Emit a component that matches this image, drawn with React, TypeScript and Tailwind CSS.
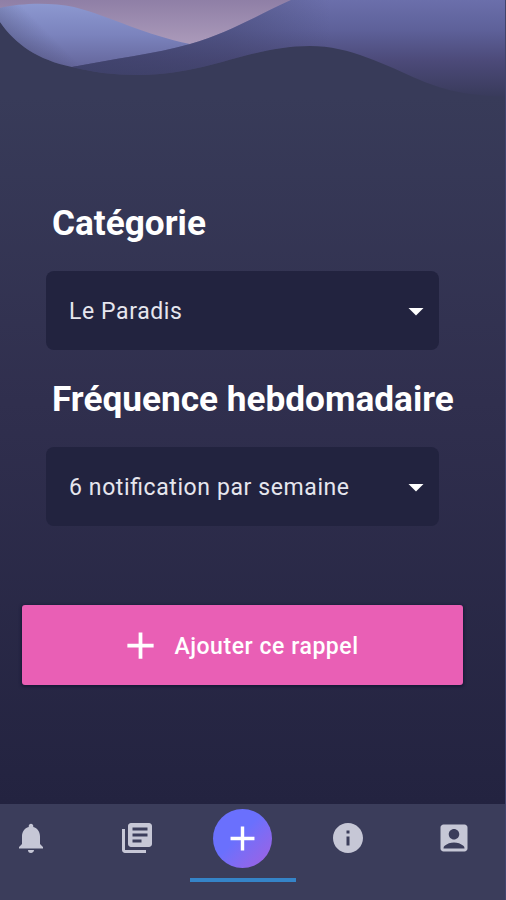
import type { IconType } from "react-icons";
import {
  MdAccountBox,
  MdAdd,
  MdArrowDropDown,
  MdInfo,
  MdLibraryBooks,
  MdNotifications,
} from "react-icons/md";

const Waves = () => (
  <svg className="block w-full h-[110px]" viewBox="0 0 505 110" fill="none">
    <defs>
      <linearGradient id="sky" x1="0" y1="0" x2="0" y2="44" gradientUnits="userSpaceOnUse">
        <stop stopColor="#8f7fa6" />
        <stop offset="1" stopColor="#ab9aba" />
      </linearGradient>
      <linearGradient id="leftWave" x1="60" y1="2" x2="60" y2="68" gradientUnits="userSpaceOnUse">
        <stop stopColor="#8d99d1" />
        <stop offset="0.5" stopColor="#7b83bd" />
        <stop offset="1" stopColor="#64659a" />
      </linearGradient>
      <linearGradient id="leftShade" x1="12" y1="52" x2="40" y2="24" gradientUnits="userSpaceOnUse">
        <stop stopColor="#45466a" stopOpacity="0.5" />
        <stop offset="1" stopColor="#45466a" stopOpacity="0" />
      </linearGradient>
      <linearGradient id="rightWave" x1="0" y1="0" x2="0" y2="98" gradientUnits="userSpaceOnUse">
        <stop stopColor="#6b6fab" />
        <stop offset="0.3" stopColor="#5e619a" />
        <stop offset="0.62" stopColor="#4c4a79" />
        <stop offset="1" stopColor="#383a5a" />
      </linearGradient>
      <linearGradient id="midShade" x1="70" y1="0" x2="330" y2="0" gradientUnits="userSpaceOnUse">
        <stop stopColor="#3c4068" stopOpacity="0.75" />
        <stop offset="0.6" stopColor="#3c4068" stopOpacity="0.4" />
        <stop offset="1" stopColor="#3c4068" stopOpacity="0" />
      </linearGradient>
    </defs>
    <path d="M0 0H300L250 40L190 46L60 30L0 12Z" fill="url(#sky)" />
    <path d="M0 8C20 3 50 2 74 7C112 17 145 35 190 44L150 60L72 67C38 60 15 44 0 22Z" fill="url(#leftWave)" />
    <path d="M0 8C20 3 50 2 74 7C112 17 145 35 190 44L150 60L72 67C38 60 15 44 0 22Z" fill="url(#leftShade)" />
    <path
      d="M72 67C112 59 155 54 190 44C228 33 254 17 291 0H505V97C470 95 448 92 420 80C385 65 350 46 310 46C250 46 210 74 140 75C112 75 92 72 72 67Z"
      fill="url(#rightWave)"
    />
    <path
      d="M72 67C112 59 155 54 190 44C228 33 254 17 291 0H330V47L310 46C250 46 210 74 140 75C112 75 92 72 72 67Z"
      fill="url(#midShade)"
    />
  </svg>
);

const SelectField = ({ label, value }: { label: string; value: string }) => (
  <div>
    <h2 className="ml-[6px] text-[35.2px] leading-[42px] font-bold text-white whitespace-nowrap">{label}</h2>
    <button className="mt-[27px] flex h-[79px] w-[393px] items-center justify-between rounded-lg bg-[#22233f] pl-[23px] pr-[5px]">
      <span className="pt-[3px] text-[23px] tracking-[0.6px] text-[#e6e6ee] whitespace-nowrap [font-feature-settings:'liga'_1]">
        {value}
      </span>
      <MdArrowDropDown className="size-9 text-white" />
    </button>
  </div>
);

const tabs: { name: string; icon: IconType }[] = [
  { name: "Notifications", icon: MdNotifications },
  { name: "Catégories", icon: MdLibraryBooks },
  { name: "Ajouter", icon: MdAdd },
  { name: "Infos", icon: MdInfo },
  { name: "Compte", icon: MdAccountBox },
];

const BottomBar = () => (
  <nav className="h-24 bg-[#3b3d5b]">
    <div className="-ml-[22px] flex h-full w-[529px]">
      {tabs.map(({ name, icon: Icon }) =>
        name === "Ajouter" ? (
          <button key={name} aria-label={name} className="flex w-[106px] shrink-0 flex-col items-center pt-[5px]">
            <span className="flex size-[59px] items-center justify-center rounded-full bg-linear-to-br from-[#6a70fd] from-45% to-[#a05fe0]">
              <Icon className="size-[41px] text-white" />
            </span>
            <span className="mt-[10px] h-[4px] w-full bg-[#3584c8]" />
          </button>
        ) : (
          <button key={name} aria-label={name} className="flex h-[68px] flex-1 items-center justify-center">
            <Icon className="size-9 text-[#c6c7d6]" />
          </button>
        )
      )}
    </div>
  </nav>
);

const App = () => {
  return (
    <div className="flex h-[900px] w-[506px] flex-col overflow-hidden border-r border-[#41446d] bg-[#24243f] font-['Roboto',sans-serif]">
      <main className="h-[804px] bg-linear-to-b from-[#383b59] from-12% via-[#302f4e] via-50% to-[#232340]">
        <Waves />
        <div className="ml-[46px] mt-[92px] space-y-[28px]">
          <SelectField label="Catégorie" value="Le Paradis" />
          <SelectField label="Fréquence hebdomadaire" value="6 notification par semaine" />
        </div>
        <button className="ml-[22px] mt-[79px] flex h-[80px] w-[441px] items-center justify-center gap-[11px] rounded-[3px] bg-[#e95fb5] pr-[8px] text-white shadow-[0_1px_3px_1px_#171936]">
          <MdAdd className="size-[45px]" />
          <span className="pt-[4px] text-[23px] font-medium tracking-[0.55px]">Ajouter ce rappel</span>
        </button>
      </main>
      <BottomBar />
    </div>
  );
};

export default App;
